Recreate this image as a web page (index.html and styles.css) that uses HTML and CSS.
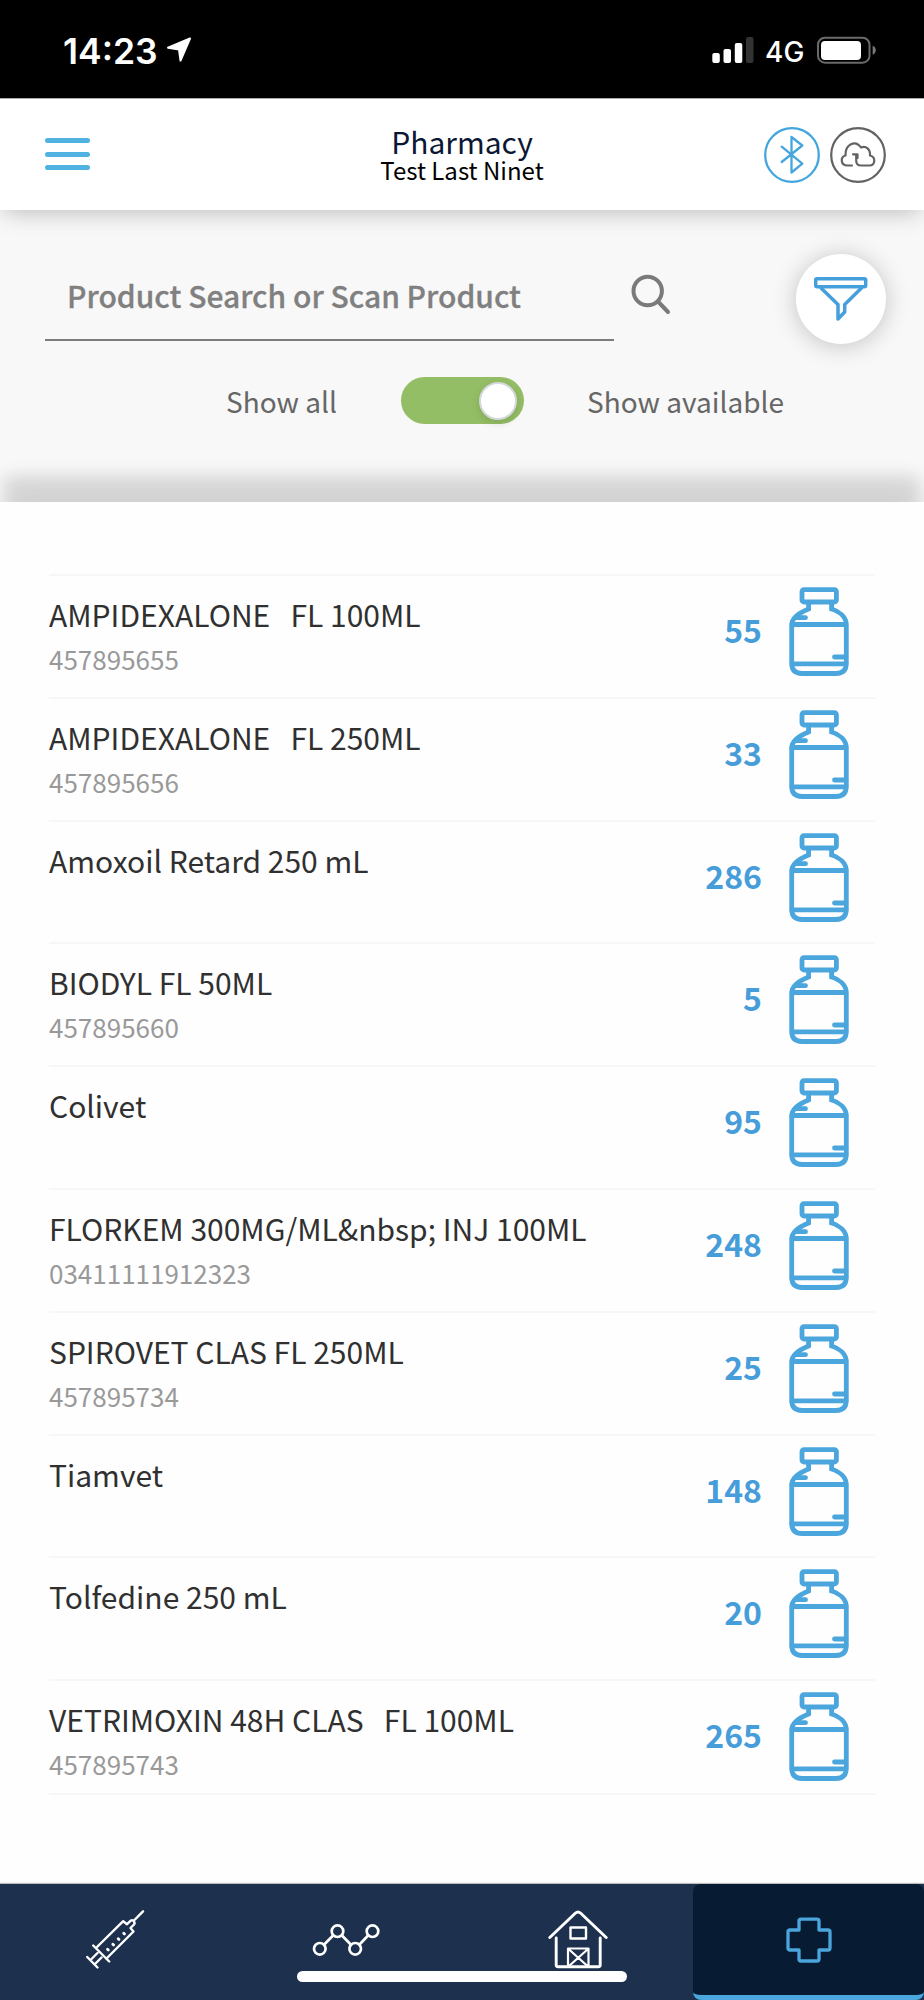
FILE: index.html
```html
<!DOCTYPE html>
<html lang="en">

<head>
    <meta charset="UTF-8">
    <meta name="viewport" content="width=device-width, initial-scale=1.0">
    <title>Pharmacy</title>
    <link rel="stylesheet" href="styles.css">
</head>

<body>
    <!-- Shared vial icon -->
    <svg class="sprite" width="0" height="0">
        <symbol id="vial" viewBox="0 0 60 90">
            <g fill="none" stroke="#4aa6dc" stroke-width="4.8" stroke-linecap="round">
                <rect x="13" y="2.6" width="34.4" height="12.4" rx="2" />
                <path d="M19.6 17V22C11 25.500 2.700 30 2.700 38V76Q2.700 86.500 13 86.500H47Q57.300 86.500 57.300 76V38C57.300 30 50.500 24.500 42.600 22V17" />
                <path d="M3 37.500H57M3 76.800H57M7 30.700H16.500M45.500 70H57" />
            </g>
        </symbol>
    </svg>

    <div class="status-bar">
        <div class="status-left">
            <span class="time">14:23</span>
            <svg width="26" height="26" viewBox="0 0 26 26">
                <path d="M24 1.500L2 10.700L13 12.500L14.500 23.500Z" fill="#fff" stroke="#fff" stroke-width="2" stroke-linejoin="round" />
            </svg>
        </div>
        <div class="status-right">
            <svg width="42" height="28" viewBox="0 0 42 28">
                <g fill="#fff">
                    <rect x="0.300" y="17" width="7.500" height="10" rx="2" />
                    <rect x="11.500" y="13" width="7.500" height="14" rx="2" />
                    <rect x="22.800" y="7" width="7.500" height="20" rx="2" />
                </g>
                <rect x="34" y="1" width="7.500" height="26" rx="2" fill="#333" />
            </svg>
            <span class="network">4G</span>
            <svg width="60" height="28" viewBox="0 0 60 28">
                <rect x="1" y="1.700" width="51.500" height="25" rx="7" fill="none" stroke="#6a6a6a" stroke-width="2" />
                <rect x="4" y="5" width="40" height="19" rx="4" fill="#fff" />
                <path d="M55.700 9.700Q58.700 11 58.700 14.200Q58.700 17.500 55.700 18.800Z" fill="#7a7a7a" />
            </svg>
        </div>
    </div>

    <header class="header">
        <button class="menu-btn" aria-label="Menu">
            <span></span>
            <span></span>
            <span></span>
        </button>
        <div class="title">
            <h1>Pharmacy</h1>
            <p>Test Last Ninet</p>
        </div>
        <div class="header-icons">
            <svg width="56" height="56" viewBox="0 0 56 56" fill="none" stroke="#45a6dd" stroke-width="2.300" stroke-linejoin="round" stroke-linecap="round">
                <circle cx="28" cy="28" r="26.800" />
                <path d="M17.700 19.700L38.300 36.700L27.500 45.500V10L38.300 18.500L17.700 35" />
            </svg>
            <svg width="56" height="56" viewBox="0 0 56 56" fill="none" stroke="#636363" stroke-width="2.200" stroke-linejoin="round" stroke-linecap="round">
                <circle cx="28" cy="28" r="26.800" />
                <path d="M22 38.500H17.500C10.500 38.500 10 30 15.500 28.500C15 17 25.500 12.500 31 20.500C36 18.500 40.500 22 40 28.500C46 30 45.500 38.500 39.500 38.500H31C28 38.500 26.200 36.500 26.200 33.500V28" />
                <path d="M23 27.300H27.500V31" />
            </svg>
        </div>
    </header>

    <section class="filters">
        <div class="search-row">
            <input class="search-input" type="text" placeholder="Product Search or Scan Product">
            <svg class="search-icon" width="42" height="42" viewBox="0 0 42 42" fill="none" stroke="#7a7a7a" stroke-width="4" stroke-linecap="round">
                <circle cx="17.700" cy="18" r="14.200" />
                <path d="M28 28.500L38 39" />
            </svg>
            <button class="filter-btn" aria-label="Filter">
                <svg width="90" height="90" viewBox="0 0 90 90" fill="none" stroke="#459fdc" stroke-width="3.500" stroke-linejoin="round">
                    <rect x="19.700" y="24.700" width="50" height="8" rx="1.500" />
                    <path d="M24.500 33.500L42 50.500V65L48.700 58V50.500L66 33.500" />
                </svg>
            </button>
        </div>
        <div class="toggle-row">
            <span class="label-all">Show all</span>
            <div class="toggle">
                <div class="knob"></div>
            </div>
            <span class="label-available">Show available</span>
        </div>
    </section>

    <main class="products">
        <ul class="product-list">
            <li class="product">
                <div class="info">
                    <div class="name">AMPIDEXALONE &nbsp; FL 100ML</div>
                    <div class="code">457895655</div>
                </div>
                <div class="count">55</div>
                <svg class="vial"><use href="#vial" /></svg>
            </li>
            <li class="product">
                <div class="info">
                    <div class="name">AMPIDEXALONE &nbsp; FL 250ML</div>
                    <div class="code">457895656</div>
                </div>
                <div class="count">33</div>
                <svg class="vial"><use href="#vial" /></svg>
            </li>
            <li class="product">
                <div class="info">
                    <div class="name">Amoxoil Retard 250 mL</div>
                </div>
                <div class="count">286</div>
                <svg class="vial"><use href="#vial" /></svg>
            </li>
            <li class="product">
                <div class="info">
                    <div class="name">BIODYL FL 50ML</div>
                    <div class="code">457895660</div>
                </div>
                <div class="count">5</div>
                <svg class="vial"><use href="#vial" /></svg>
            </li>
            <li class="product">
                <div class="info">
                    <div class="name">Colivet</div>
                </div>
                <div class="count">95</div>
                <svg class="vial"><use href="#vial" /></svg>
            </li>
            <li class="product">
                <div class="info">
                    <div class="name">FLORKEM 300MG/ML&amp;nbsp; INJ 100ML</div>
                    <div class="code">03411111912323</div>
                </div>
                <div class="count">248</div>
                <svg class="vial"><use href="#vial" /></svg>
            </li>
            <li class="product">
                <div class="info">
                    <div class="name">SPIROVET CLAS FL 250ML</div>
                    <div class="code">457895734</div>
                </div>
                <div class="count">25</div>
                <svg class="vial"><use href="#vial" /></svg>
            </li>
            <li class="product">
                <div class="info">
                    <div class="name">Tiamvet</div>
                </div>
                <div class="count">148</div>
                <svg class="vial"><use href="#vial" /></svg>
            </li>
            <li class="product">
                <div class="info">
                    <div class="name">Tolfedine 250 mL</div>
                </div>
                <div class="count">20</div>
                <svg class="vial"><use href="#vial" /></svg>
            </li>
            <li class="product">
                <div class="info">
                    <div class="name">VETRIMOXIN 48H CLAS &nbsp; FL 100ML</div>
                    <div class="code">457895743</div>
                </div>
                <div class="count">265</div>
                <svg class="vial"><use href="#vial" /></svg>
            </li>
        </ul>
    </main>

    <!-- Bottom Navigation -->
    <nav class="bottom-nav">
        <a class="tab">
            <svg width="59" height="60" viewBox="0 0 59 60" fill="none" stroke="#fff" stroke-width="2.400" stroke-linecap="round" stroke-linejoin="round">
                <path d="M57 1.300L48.500 10" />
                <path d="M10 38L37.200 11.200L41 14.200L44.500 10.800Q47 9.500 48 11.500Q49.500 13.500 47.500 15L44.500 18L47.500 21.500L20.500 48.500" />
                <path d="M7.200 35.500L23.200 51.500M1.200 47L11.500 57.500M11.500 43L5.500 49M15.500 47.500L9.500 53.500" />
                <path d="M21.500 39.200L22.300 40M26.800 34.200L27.600 35M32.200 28.800L33 29.600M37.700 23.200L38.500 24" stroke-width="2.800" />
            </svg>
        </a>
        <a class="tab">
            <svg width="71" height="34" viewBox="0 0 71 34" fill="none" stroke="#fff" stroke-width="2.700">
                <circle cx="8.800" cy="25.800" r="5.800" />
                <circle cx="26.500" cy="8.200" r="5.800" />
                <circle cx="44.200" cy="25.800" r="5.800" />
                <circle cx="61.500" cy="8.200" r="5.800" />
                <path d="M13 21.700L22.300 12.300M30.700 12.300L40 21.700M48.300 21.700L57.300 12.300" />
            </svg>
        </a>
        <a class="tab">
            <svg width="60" height="60" viewBox="0 0 60 60" fill="none" stroke="#fff" stroke-width="2.900" stroke-linecap="round" stroke-linejoin="round">
                <path d="M1.800 27.500L27.500 3Q30 0.800 32.500 3L58.200 27.500" />
                <path d="M8.200 28V55Q8.200 56.700 10 56.700H50.400Q52.200 56.700 52.200 55V28" />
                <rect x="22.500" y="17.500" width="15.500" height="11" stroke-width="2.400" />
                <path d="M20 56V38.500H40.500V56M20.500 39L40 56.500M40 39L20.500 56.500" stroke-width="2.200" />
            </svg>
        </a>
        <a class="tab active">
            <svg width="46" height="46" viewBox="0 0 46 46" fill="none" stroke="#4aa6dc" stroke-width="3.300" stroke-linejoin="round">
                <path d="M15 2.200H31Q33 2.200 33 4.200V13H42Q44 13 44 15V31Q44 33 42 33H33V42Q33 44 31 44H15Q13 44 13 42V33H4Q2 33 2 31V15Q2 13 4 13H13V4.200Q13 2.200 15 2.200Z" />
            </svg>
        </a>
        <div class="home-indicator"></div>
    </nav>
</body>

</html>
```

FILE: styles.css
```css
* {
    box-sizing: border-box;
}

body {
    margin: 0;
    height: 2000px;
    display: flex;
    flex-direction: column;
    overflow: hidden;
    background: #fefefe;
    font-family: "Noto Sans CJK SC", "Noto Sans", sans-serif;
}

h1,
p,
ul {
    margin: 0;
    padding: 0;
}

svg {
    display: block;
    flex: none;
}

button {
    border: none;
    padding: 0;
    background: none;
}

.sprite {
    position: absolute;
}
/* Status bar */

.status-bar {
    height: 98px;
    flex: none;
    display: flex;
    justify-content: space-between;
    padding: 36px 47px 0 63px;
    background: #000;
    color: #fff;
    font-family: Inter, sans-serif;
}

.status-left,
.status-right {
    display: flex;
    height: 28px;
    align-items: center;
}

.status-left {
    gap: 8px;
}

.time {
    padding-top: 3px;
    font-size: 35.5px;
    font-weight: 600;
    line-height: 28px;
}

.network {
    width: 39px;
    margin: 3px 13px 0 11px;
    font-size: 28px;
    font-weight: 500;
    line-height: 28px;
}
/* Header */

.header {
    height: 112px;
    flex: none;
    display: grid;
    grid-template-columns: 1fr auto 1fr;
    padding: 0 38px;
    border-top: 1px solid #aaa;
    background: #fff;
    box-shadow: 0 6px 22px -4px rgba(0, 0, 0, 0.25);
    z-index: 2;
}

.menu-btn {
    width: 45px;
    height: 32px;
    margin: 39px 0 0 7px;
    display: flex;
    flex-direction: column;
    justify-content: space-between;
}

.menu-btn span {
    width: 44.5px;
    height: 5px;
    border-radius: 3px;
    background: #50b2e0;
}

.title {
    padding-top: 26px;
    text-align: center;
}

.title h1 {
    font-size: 30px;
    font-weight: 400;
    line-height: 32px;
    color: #0b1734;
}

.title p {
    font-size: 24px;
    line-height: 26px;
    color: #000;
}

.header-icons {
    display: flex;
    justify-content: flex-end;
    gap: 10px;
    padding-top: 28px;
}
/* Search and filters */

.filters {
    height: 292px;
    flex: none;
    padding: 44px 38px 0 45px;
    background: #f8f8f8;
}

.search-row {
    display: flex;
    height: 90px;
}

.search-input {
    width: 569px;
    height: 87px;
    padding: 0 22px 4px;
    border: none;
    border-bottom: 2px solid #7c7c7c;
    outline: none;
    background: none;
    font-family: inherit;
    font-size: 30px;
    font-weight: 500;
}

.search-input::placeholder {
    color: #808080;
    opacity: 1;
    -webkit-text-stroke: 0.3px #808080;
}

.search-icon {
    margin: 19px 0 0 16px;
}

.filter-btn {
    width: 90px;
    height: 90px;
    margin-left: auto;
    border-radius: 50%;
    background: #fff;
    box-shadow: 0 2px 24px rgba(0, 0, 0, 0.22);
}

.toggle-row {
    display: flex;
    align-items: center;
    height: 47px;
    margin-top: 33px;
    font-size: 28px;
    color: #666;
}

.label-all {
    width: 356px;
    padding-left: 181px;
    white-space: nowrap;
}

.toggle {
    width: 123px;
    height: 47px;
    padding: 5px 7px 4px;
    border-radius: 24px;
    background: #94be65;
    display: flex;
    justify-content: flex-end;
}

.knob {
    width: 38px;
    height: 38px;
    border: 2px solid #d3d8dc;
    border-radius: 50%;
    background: #fff;
    box-shadow: 0 3px 8px rgba(0, 0, 0, 0.12);
}

.label-available {
    margin-left: 63px;
}
/* Product list */

.products {
    flex: 1;
    padding: 72px 49px 0;
    background: #fefefe;
    box-shadow: 0 -30px 16px -4px rgba(0, 0, 0, 0.13), 0 -8px 40px rgba(0, 0, 0, 0.04);
}

.product-list {
    list-style: none;
    border-bottom: 2px solid #f7f7f7;
}

.product {
    height: 122.8px;
    display: flex;
    padding-right: 26px;
    border-top: 2px solid #f7f7f7;
}

.product:last-child {
    height: 113.5px;
}

.info {
    flex: 1;
    padding-top: 16px;
}

.name {
    font-size: 30px;
    line-height: 44px;
    color: #303030;
}

.code {
    font-size: 26px;
    line-height: 46px;
    color: #999;
}

.count {
    padding-top: 31px;
    margin-right: 27px;
    font-size: 32px;
    font-weight: 700;
    line-height: 44px;
    color: #469dda;
}

.vial {
    width: 60px;
    height: 90px;
    margin-top: 11px;
}
/* Bottom navigation */

.bottom-nav {
    position: relative;
    height: 116px;
    flex: none;
    display: flex;
    background: #1d304d;
    box-shadow: 0 -1px 1px rgba(0, 0, 0, 0.25);
}

.tab {
    flex: 1;
    display: flex;
    align-items: center;
    justify-content: center;
    border-bottom: 5px solid transparent;
}

.tab.active {
    border-radius: 8px;
    background: #071b33;
    border-bottom-color: #4aa6dc;
}

.home-indicator {
    position: absolute;
    left: 297px;
    bottom: 18px;
    width: 330px;
    height: 11px;
    border-radius: 6px;
    background: #fff;
}
```
